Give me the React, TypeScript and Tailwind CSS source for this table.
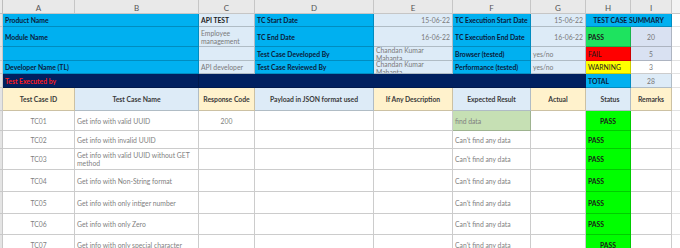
import type { ReactNode } from "react";

const font = { fontFamily: "Lato, 'Liberation Sans', sans-serif" };

function Cell({
  w,
  className = "",
  children,
}: {
  w: string;
  className?: string;
  children?: ReactNode;
}) {
  return (
    <div
      className={`${w} flex h-full shrink-0 items-center overflow-hidden border-r border-b border-black/20 px-[2px] ${className}`}
    >
      {children}
    </div>
  );
}

function Strip() {
  return <div className="h-full w-[3px] shrink-0 border-r border-b border-[#c8c8c8] bg-[#e4e4e4]" />;
}

const cyanLabel = "bg-[#00b0f0] font-bold text-[#0b1a3a] whitespace-nowrap";
const light = "bg-[#ddebf7] text-[#7a7a7a]";

const rows = [
  { id: "TC01", name: "Get info with valid UUID", code: "200", expected: "find data", h: "h-[20px]", statusCenter: true, green: true },
  { id: "TC02", name: "Get info with invalid UUID", code: "", expected: "Can't find any data", h: "h-[18px]", statusCenter: false },
  { id: "TC03", name: "Get info with valid UUID without GET method", code: "", expected: "Can't find any data", h: "h-[21px]", statusCenter: false },
  { id: "TC04", name: "Get info with Non-String format", code: "", expected: "Can't find any data", h: "h-[22px]", statusCenter: false },
  { id: "TC05", name: "Get info with only intiger number", code: "", expected: "Can't find any data", h: "h-[22px]", statusCenter: false },
  { id: "TC06", name: "Get info with only Zero", code: "", expected: "Can't find any data", h: "h-[21px]", statusCenter: false },
  { id: "TC07", name: "Get info with only special character", code: "", expected: "Can't find any data", h: "h-[21px]", statusCenter: true },
];

function Wrapped() {
  return (
    <div className="flex flex-col leading-[7.5px]">
      <span>Chandan Kumar</span>
      <span>Mahanta</span>
    </div>
  );
}

export default function App() {
  return (
    <div className="h-[248px] w-[680px] overflow-hidden bg-white text-[6.8px] leading-[8px]" style={font}>
      {/* column letters */}
      <div className="flex h-[14px] bg-[#e9e9e9] text-[8px] text-[#555]">
        <div className="h-full w-[3px] shrink-0 border-r border-b border-[#bdbdbd]" />
        {[
          ["A", "w-[72px]"],
          ["B", "w-[124px]"],
          ["C", "w-[56px]"],
          ["D", "w-[119px]"],
          ["E", "w-[79px]"],
          ["F", "w-[78px]"],
          ["G", "w-[55px]"],
          ["H", "w-[45px]"],
          ["I", "w-[41px]"],
        ].map(([l, w]) => (
          <div key={l} className={`${w} flex shrink-0 items-end justify-center border-r border-b border-[#c6c6c6] pb-[1px]`}>
            {l}
          </div>
        ))}
        <div className="flex-1 border-b border-[#c6c6c6] bg-[#f3f3f3]" />
      </div>

      {/* row 1 */}
      <div className="flex h-[13px]">
        <Strip />
        <Cell w="w-[196px]" className={cyanLabel}>Product Name</Cell>
        <Cell w="w-[56px]" className="bg-[#ddebf7] font-bold text-[#222]">API TEST</Cell>
        <Cell w="w-[119px]" className={cyanLabel}>TC Start Date</Cell>
        <Cell w="w-[79px]" className={`${light} justify-end`}>15-06-22</Cell>
        <Cell w="w-[78px]" className={cyanLabel}>TC Execution Start Date</Cell>
        <Cell w="w-[55px]" className={`${light} justify-end`}>15-06-22</Cell>
        <Cell w="w-[86px]" className={`${cyanLabel} justify-center`}>TEST CASE SUMMARY</Cell>
        <div className="flex-1 border-b border-[#e2e2e2]" />
      </div>

      {/* row 2 */}
      <div className="flex h-[20px]">
        <Strip />
        <Cell w="w-[196px]" className={cyanLabel}>Module Name</Cell>
        <Cell w="w-[56px]" className={light}>Employee management</Cell>
        <Cell w="w-[119px]" className={cyanLabel}>TC End Date</Cell>
        <Cell w="w-[79px]" className={`${light} justify-end`}>16-06-22</Cell>
        <Cell w="w-[78px]" className={cyanLabel}>TC Execution End Date</Cell>
        <Cell w="w-[55px]" className={`${light} justify-end`}>16-06-22</Cell>
        <Cell w="w-[45px]" className="bg-[#1ee35f] font-bold text-[#1a1a1a]">PASS</Cell>
        <Cell w="w-[41px]" className="justify-center bg-[#d9e1f2] text-[#777]">20</Cell>
        <div className="flex-1 border-b border-[#e2e2e2]" />
      </div>

      {/* row 3 */}
      <div className="flex h-[14px]">
        <Strip />
        <Cell w="w-[196px]" className={cyanLabel} />
        <Cell w="w-[56px]" className={light} />
        <Cell w="w-[119px]" className={cyanLabel}>Test Case Developed By</Cell>
        <Cell w="w-[79px]" className={`${light} items-start`}>
          <Wrapped />
        </Cell>
        <Cell w="w-[78px]" className={cyanLabel}>Browser (tested)</Cell>
        <Cell w="w-[55px]" className={light}>yes/no</Cell>
        <Cell w="w-[45px]" className="bg-[#ff0000] text-[#1a1a1a]">FAIL</Cell>
        <Cell w="w-[41px]" className="justify-center bg-[#d9e1f2] text-[#777]">5</Cell>
        <div className="flex-1 border-b border-[#e2e2e2]" />
      </div>

      {/* row 4 */}
      <div className="flex h-[13px]">
        <Strip />
        <Cell w="w-[196px]" className={cyanLabel}>Developer Name (TL)</Cell>
        <Cell w="w-[56px]" className={`${light} whitespace-nowrap`}>API developer</Cell>
        <Cell w="w-[119px]" className={cyanLabel}>Test Case Reviewed By</Cell>
        <Cell w="w-[79px]" className={`${light} items-start`}>
          <Wrapped />
        </Cell>
        <Cell w="w-[78px]" className={cyanLabel}>Performance (tested)</Cell>
        <Cell w="w-[55px]" className={light}>yes/no</Cell>
        <Cell w="w-[45px]" className="bg-[#ffff00] text-[#1a1a1a]">WARNING</Cell>
        <Cell w="w-[41px]" className="justify-center bg-white text-[#777]">3</Cell>
        <div className="flex-1 border-b border-[#e2e2e2]" />
      </div>

      {/* row 5 */}
      <div className="flex h-[14px]">
        <Strip />
        <Cell w="w-[196px]" className="bg-[#002060] font-bold text-[#ff1a1a]">Test Executed by</Cell>
        <div className="flex h-full w-[387px] shrink-0 border-b border-black/20 bg-[#002060]" />
        <Cell w="w-[45px]" className="bg-[#00b0f0] font-bold text-[#0b1a3a]">TOTAL</Cell>
        <Cell w="w-[41px]" className="justify-center bg-[#ddebf7] text-[#777]">28</Cell>
        <div className="flex-1 border-b border-[#e2e2e2]" />
      </div>

      {/* table header */}
      <div className="flex h-[23px] whitespace-nowrap font-bold text-[#3a3a3a]">
        <Strip />
        <Cell w="w-[72px]" className="justify-center border-[#a6a6a6] bg-[#fff2cc]">Test Case ID</Cell>
        <Cell w="w-[124px]" className="justify-center border-[#a6a6a6] bg-[#ddebf7]">Test Case Name</Cell>
        <Cell w="w-[56px]" className="justify-center border-[#a6a6a6] bg-[#fff2cc]">Response Code</Cell>
        <Cell w="w-[119px]" className="justify-center border-[#a6a6a6] bg-[#ddebf7]">Payload in JSON format used</Cell>
        <Cell w="w-[79px]" className="justify-center border-[#a6a6a6] bg-[#fff2cc]">If Any Description</Cell>
        <Cell w="w-[78px]" className="justify-center border-[#a6a6a6] bg-[#ddebf7]">Expected Result</Cell>
        <Cell w="w-[55px]" className="justify-center border-[#a6a6a6] bg-[#fff2cc]">Actual</Cell>
        <Cell w="w-[45px]" className="justify-center border-[#a6a6a6] bg-[#ddebf7] pl-[6px]">Status</Cell>
        <Cell w="w-[41px]" className="justify-center border-[#a6a6a6] bg-[#fff2cc]">Remarks</Cell>
        <div className="flex-1 border-b border-[#e2e2e2]" />
      </div>

      {rows.map((r) => (
        <div key={r.id} className={`flex ${r.h} text-[#7f7f7f]`}>
          <Strip />
          <Cell w="w-[72px]" className="justify-center border-[#a6a6a6]">{r.id}</Cell>
          <Cell w="w-[124px]" className="border-[#a6a6a6]">{r.name}</Cell>
          <Cell w="w-[56px]" className="justify-center border-[#a6a6a6]">{r.code}</Cell>
          <Cell w="w-[119px]" className="border-[#a6a6a6]" />
          <Cell w="w-[79px]" className="border-[#a6a6a6]" />
          <Cell w="w-[78px]" className={`border-[#a6a6a6] ${r.green ? "bg-[#c6e0b4]" : ""}`}>{r.expected}</Cell>
          <Cell w="w-[55px]" className="border-[#a6a6a6]" />
          <Cell
            w="w-[45px]"
            className={`border-[#a6a6a6] bg-[#00ff00] font-bold text-[#1a1a1a] ${r.statusCenter ? "justify-center" : ""}`}
          >
            PASS
          </Cell>
          <Cell w="w-[41px]" className="border-[#a6a6a6]" />
          <div className="flex-1 border-b border-[#e2e2e2]" />
        </div>
      ))}
    </div>
  );
}
